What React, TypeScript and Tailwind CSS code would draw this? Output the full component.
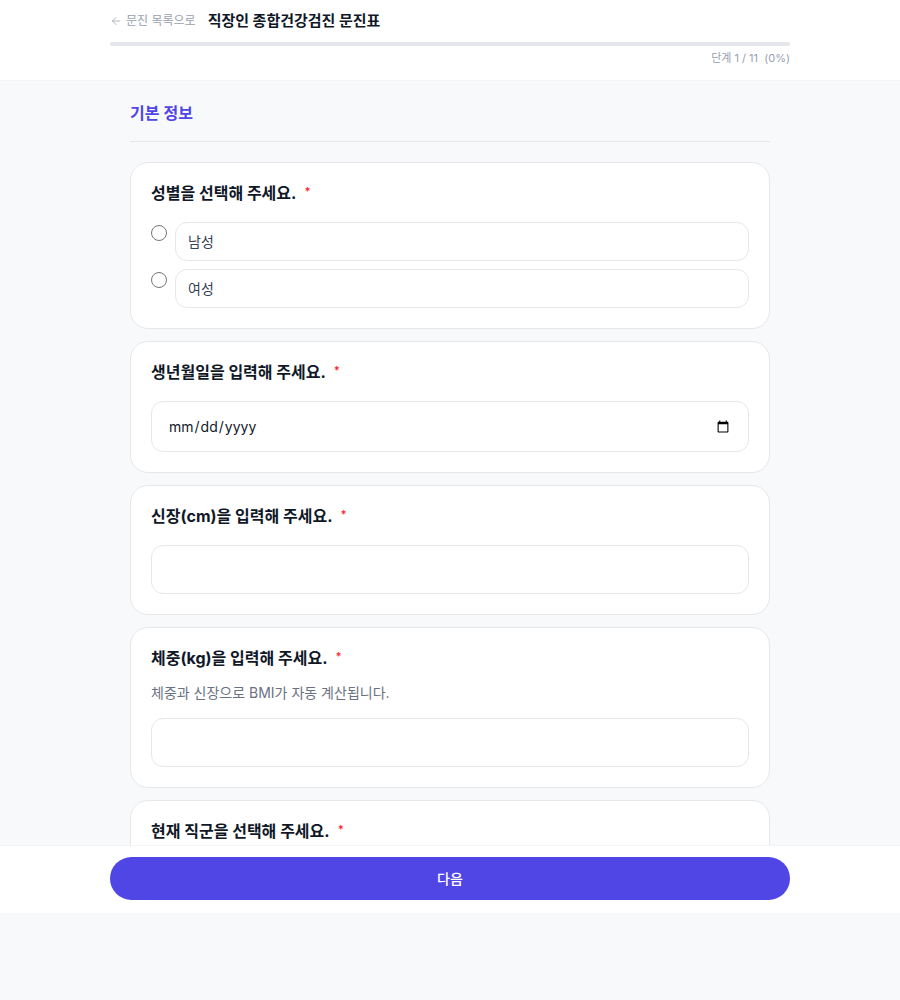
import React from "react";
import { ArrowLeft } from "lucide-react";

const font = { fontFamily: 'Inter, "Noto Sans CJK KR", "Noto Sans", sans-serif' };

function Title({ children }: { children: React.ReactNode }) {
  return (
    <div className="flex items-start text-[16px] leading-5 font-bold text-gray-900">
      <span>{children}</span>
      <span className="ml-2 text-[11px] leading-4 text-red-500">*</span>
    </div>
  );
}

function Card({ children }: { children: React.ReactNode }) {
  return <div className="rounded-[18px] border border-gray-200 bg-white p-5">{children}</div>;
}

export default function App() {
  return (
    <div className="min-h-[1000px] bg-[#f8f9fb]" style={font}>
      <div className="flex h-[913px] flex-col">
        <header className="border-b border-gray-100 bg-white">
          <div className="mx-auto w-[680px] pt-[11px] pb-[14px]">
            <div className="flex h-5 items-center">
              <span className="flex items-center gap-1 text-[12px] text-gray-400">
                <ArrowLeft className="h-3 w-3" strokeWidth={1.5} />
                문진 목록으로
              </span>
              <span className="ml-3 text-[15px] font-bold text-gray-900">직장인 종합건강검진 문진표</span>
            </div>
            <div className="mt-[11px] h-1 w-full rounded-full bg-gray-200" />
            <div className="mt-[4px] text-right text-[11px] leading-4 text-gray-400">단계 1 / 11 &nbsp;(0%)</div>
          </div>
        </header>
        <main className="flex-1 overflow-hidden">
          <div className="mx-auto w-[640px] pt-5">
            <div className="border-b border-gray-200 pb-4 text-[16px] leading-6 font-semibold text-[#4f46e5]">기본 정보</div>
            <div className="mt-5 flex flex-col gap-3">
              <Card>
                <Title>성별을 선택해 주세요.</Title>
                <div className="mt-[19px] flex flex-col gap-2">
                  {["남성", "여성"].map((o) => (
                    <label key={o} className="flex items-start gap-2">
                      <input type="radio" name="sex" className="mt-[3px] h-4 w-4 accent-[#4f46e5]" />
                      <div className="flex h-[39px] flex-1 items-center rounded-xl border border-gray-200 px-3 text-[14px] text-gray-700">
                        {o}
                      </div>
                    </label>
                  ))}
                </div>
              </Card>
              <Card>
                <Title>생년월일을 입력해 주세요.</Title>
                <input
                  type="date"
                  className="mt-[19px] block h-[51px] w-full rounded-xl border border-gray-200 px-4 text-[14px] text-gray-900 outline-none"
                />
              </Card>
              <Card>
                <Title>신장(cm)을 입력해 주세요.</Title>
                <input
                  type="text"
                  className="mt-[19px] block h-[49px] w-full rounded-xl border border-gray-200 px-4 text-[14px] outline-none"
                />
              </Card>
              <Card>
                <Title>체중(kg)을 입력해 주세요.</Title>
                <div className="mt-[15px] text-[14px] leading-5 text-gray-500">체중과 신장으로 BMI가 자동 계산됩니다.</div>
                <input
                  type="text"
                  className="mt-[15px] block h-[49px] w-full rounded-xl border border-gray-200 px-4 text-[14px] outline-none"
                />
              </Card>
              <Card>
                <Title>현재 직군을 선택해 주세요.</Title>
                <div className="h-24" />
              </Card>
            </div>
          </div>
        </main>
        <footer className="border-t border-gray-100 bg-white pt-[11px] pb-[13px]">
          <button className="mx-auto flex h-[43px] w-[680px] items-center justify-center rounded-full bg-[#4f46e5] text-[14px] font-medium text-white">
            다음
          </button>
        </footer>
      </div>
    </div>
  );
}
